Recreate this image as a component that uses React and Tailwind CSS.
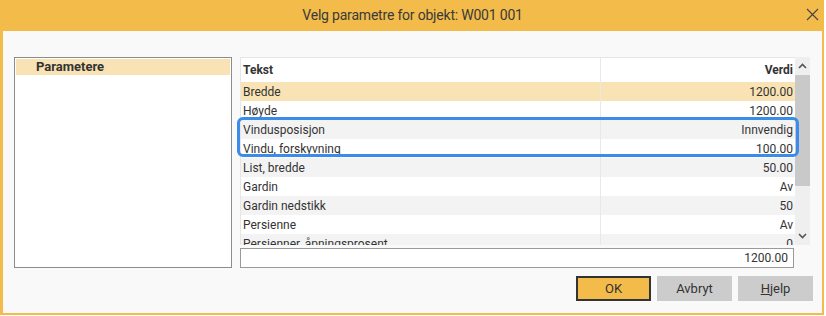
import React from "react";

const rows = [
  ["Bredde", "1200.00"],
  ["Høyde", "1200.00"],
  ["Vindusposisjon", "Innvendig"],
  ["Vindu, forskyvning", "100.00"],
  ["List, bredde", "50.00"],
  ["Gardin", "Av"],
  ["Gardin nedstikk", "50"],
  ["Persienne", "Av"],
  ["Persienner, åpningsprosent", "0"],
];

export default function App() {
  return (
    <div className="w-[826px] h-[316px] bg-white" style={{ fontFamily: "Roboto, 'Noto Sans', sans-serif" }}>
      <div className="w-[824px] h-[315px] border-l-[3px] border-r-[2px] border-b-[2px] border-[#f3bc4a] bg-[#f9f9f9] flex flex-col">
        <div className="h-[31px] bg-[#f3bc4a] flex items-center justify-center relative shrink-0">
          <span className="text-[14px] text-[#3a3a3a] tracking-[-0.2px]">Velg parametre for objekt: W001 001</span>
          <svg className="absolute right-[3px] top-[8px]" width="13" height="13" viewBox="0 0 13 13">
            <path d="M1 1L12 12M12 1L1 12" stroke="#444" strokeWidth="1.1" />
          </svg>
        </div>
        <div className="flex pt-[26px] pl-[11px] gap-[8px]">
          <div className="w-[218px] h-[211px] border border-[#8c8c8c] bg-white p-[1px]">
            <div className="h-[16px] bg-[#f9e3b4] pl-[20px] text-[13px] leading-[16px] font-bold text-[#333]">Parametere</div>
          </div>
          <div className="flex flex-col w-[570px]">
            <div className="relative flex h-[188px]">
              <div className="w-[555px] h-[188px] overflow-hidden bg-white border-t border-l border-[#e6e6e6] text-[12px] text-[#333]">
                <div className="flex h-[24px] items-center font-bold text-[12px]">
                  <div className="w-[360px] pl-[2px] border-r border-[#e8e8e8] h-full flex items-center">Tekst</div>
                  <div className="flex-1 text-right pr-[2px]">Verdi</div>
                </div>
                {rows.map(([t, v], i) => {
                  const bg = i === 0 ? "bg-[#f9e3b4]" : i % 2 === 0 ? "bg-[#f3f3f3]" : "bg-white";
                  return (
                    <div key={t} className={`flex h-[19px] items-center ${bg}`}>
                      <div className="w-[360px] pl-[2px] border-r border-[#e8e8e8] h-full flex items-center">{t}</div>
                      <div className="flex-1 text-right pr-[2px]">{v}</div>
                    </div>
                  );
                })}
              </div>
              <div className="w-[15px] h-[188px] bg-[#efefef] flex flex-col">
                <div className="h-[18px] flex items-center justify-center">
                  <svg width="9" height="6" viewBox="0 0 9 6"><path d="M1 5L4.5 1.5L8 5" stroke="#555" strokeWidth="1.6" fill="none" /></svg>
                </div>
                <div className="h-[111px] bg-[#c9c9c9]" />
                <div className="flex-1 flex items-end justify-center pb-[6px]">
                  <svg width="9" height="6" viewBox="0 0 9 6"><path d="M1 1L4.5 4.5L8 1" stroke="#555" strokeWidth="1.6" fill="none" /></svg>
                </div>
              </div>
              <div className="absolute left-[-3px] top-[60px] w-[562px] h-[40px] border-[3px] border-[#3b8beb] rounded-[6px]" />
            </div>
            <div className="mt-[3px] w-[554px] h-[20px] border border-[#9a9a9a] bg-white text-right pr-[5px] text-[12px] leading-[18px] text-[#333]">1200.00</div>
          </div>
        </div>
        <div className="flex justify-end gap-[6px] pr-[9px] mt-[8px]">
          <button className="w-[75px] h-[25px] bg-[#f3bc4a] border-[2px] border-[#333] text-[13px] text-[#333]">OK</button>
          <button className="w-[75px] h-[25px] bg-[#cccccc] text-[13px] text-[#333]">Avbryt</button>
          <button className="w-[75px] h-[25px] bg-[#cccccc] text-[13px] text-[#333]"><span className="underline">H</span>jelp</button>
        </div>
      </div>
    </div>
  );
}
